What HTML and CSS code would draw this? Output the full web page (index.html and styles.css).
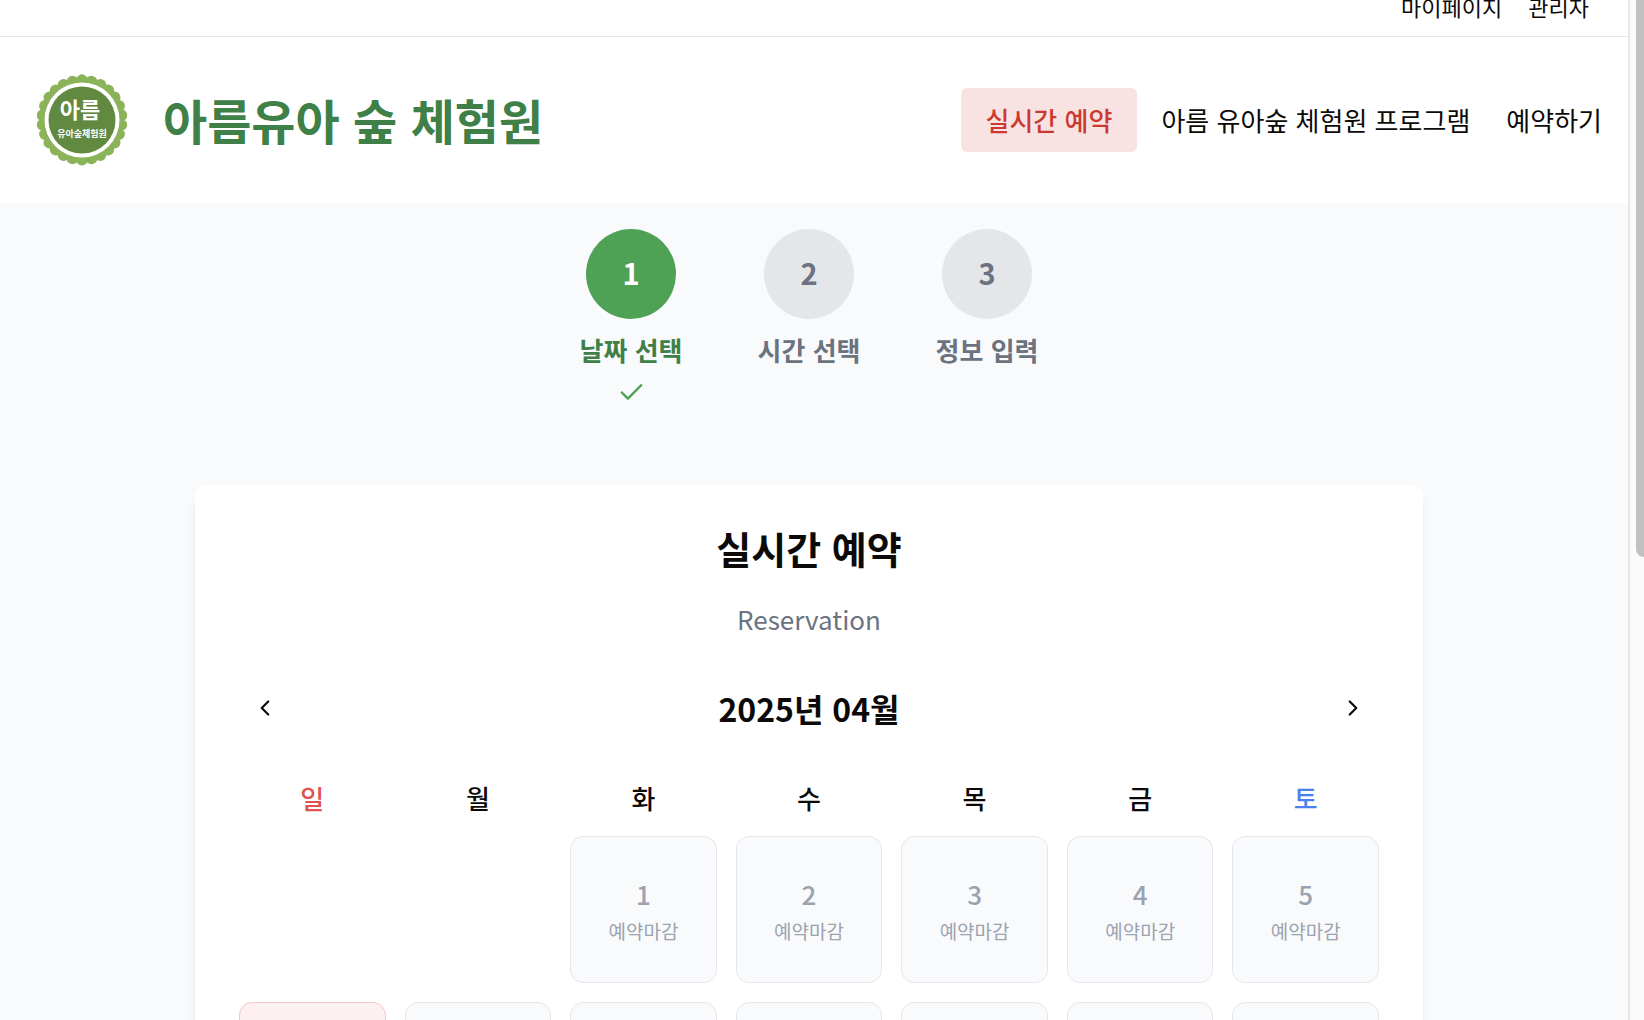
FILE: index.html
```html
<!DOCTYPE html>
<html lang="ko">
<head>
<meta charset="utf-8">
<meta name="viewport" content="width=device-width, initial-scale=1">
<title>아름유아 숲 체험원</title>
<link rel="stylesheet" href="styles.css">
</head>
<body>
<div class="viewport">
  <div class="page">
    <nav class="topbar" aria-label="사용자 메뉴">
      <a href="#">마이페이지</a>
      <a href="#">관리자</a>
    </nav>
    <header class="header">
      <a class="brand" href="#">
        <svg class="logo" viewBox="0 0 92 92" aria-hidden="true">
          <circle cx="46" cy="46" r="40" fill="#8ab35a"/>
          <circle cx="46" cy="46" r="39.5" fill="none" stroke="#8ab35a" stroke-width="12" stroke-linecap="round" pathLength="26" stroke-dasharray="0 1" transform="rotate(-90 46 46)"/>
          <circle cx="46" cy="46" r="37.5" fill="#fff"/>
          <circle cx="46" cy="46" r="33.5" fill="#61893f"/>
          <text class="logo-name" x="44" y="44" text-anchor="middle">아름</text>
          <text class="logo-sub" x="46" y="63" text-anchor="middle">유아숲체험원</text>
        </svg>
        <span class="brand-name">아름유아 숲 체험원</span>
      </a>
      <nav class="nav" aria-label="주 메뉴">
        <a class="nav-link nav-link-active" href="#">실시간 예약</a>
        <a class="nav-link" href="#">아름 유아숲 체험원 프로그램</a>
        <a class="nav-link" href="#">예약하기</a>
      </nav>
    </header>
    <main class="main">
      <ol class="steps">
        <li class="step step-current">
          <span class="step-number">1</span>
          <span class="step-label">날짜 선택</span>
          <svg class="step-check" viewBox="0 0 24 24" aria-hidden="true"><path d="M20 6 9 17l-5-5"/></svg>
        </li>
        <li class="step">
          <span class="step-number">2</span>
          <span class="step-label">시간 선택</span>
        </li>
        <li class="step">
          <span class="step-number">3</span>
          <span class="step-label">정보 입력</span>
        </li>
      </ol>
      <section class="card">
        <h1 class="card-title">실시간 예약</h1>
        <p class="card-subtitle">Reservation</p>
        <div class="month">
          <button class="month-button" type="button" aria-label="이전 달"><svg viewBox="0 0 24 24" aria-hidden="true"><path d="m15 18-6-6 6-6"/></svg></button>
          <h2 class="month-name">2025년 04월</h2>
          <button class="month-button" type="button" aria-label="다음 달"><svg viewBox="0 0 24 24" aria-hidden="true"><path d="m9 18 6-6-6-6"/></svg></button>
        </div>
        <div class="weekdays">
          <span class="sunday">일</span><span>월</span><span>화</span><span>수</span><span>목</span><span>금</span><span class="saturday">토</span>
        </div>
        <div class="days">
          <button class="day day-first" type="button" disabled><span class="day-number">1</span><span class="day-state">예약마감</span></button>
          <button class="day" type="button" disabled><span class="day-number">2</span><span class="day-state">예약마감</span></button>
          <button class="day" type="button" disabled><span class="day-number">3</span><span class="day-state">예약마감</span></button>
          <button class="day" type="button" disabled><span class="day-number">4</span><span class="day-state">예약마감</span></button>
          <button class="day" type="button" disabled><span class="day-number">5</span><span class="day-state">예약마감</span></button>
          <button class="day day-closed" type="button" disabled><span class="day-number">6</span></button>
          <button class="day" type="button" disabled><span class="day-number">7</span><span class="day-state">예약마감</span></button>
          <button class="day" type="button" disabled><span class="day-number">8</span><span class="day-state">예약마감</span></button>
          <button class="day" type="button" disabled><span class="day-number">9</span><span class="day-state">예약마감</span></button>
          <button class="day" type="button" disabled><span class="day-number">10</span><span class="day-state">예약마감</span></button>
          <button class="day" type="button" disabled><span class="day-number">11</span><span class="day-state">예약마감</span></button>
          <button class="day" type="button" disabled><span class="day-number">12</span><span class="day-state">예약마감</span></button>
        </div>
      </section>
    </main>
  </div>
  <div class="scrollbar" aria-hidden="true"><div class="scrollbar-thumb"></div></div>
</div>
</body>
</html>
```

FILE: styles.css
```css
* {
  box-sizing: border-box;
}

body {
  margin: 0;
  background: #fff;
  color: #0c0a09;
  font-family: "Noto Sans CJK KR", "Noto Sans", sans-serif;
  font-size: 26px;
  line-height: 38px;
}

a {
  color: inherit;
  text-decoration: none;
}

button {
  padding: 0;
  border: 0;
  background: none;
  color: inherit;
  font: inherit;
}

h1, h2, p, ol {
  margin: 0;
  padding: 0;
}

.viewport {
  display: flex;
  height: 100vh;
  overflow: hidden;
}

.page {
  flex: 1;
  min-width: 0;
  overflow: hidden;
}

/* Utility links, partly scrolled out above the window */
.topbar {
  display: flex;
  justify-content: flex-end;
  align-items: flex-end;
  gap: 26px;
  height: 37px;
  padding: 0 39px 14px;
  border-bottom: 1px solid #e5e5e5;
  font-size: 22px;
  line-height: 32px;
}

.header {
  display: flex;
  justify-content: space-between;
  align-items: center;
  height: 166px;
  padding: 0 26px 0 36px;
}

.brand {
  display: flex;
  align-items: center;
  gap: 35px;
}

.logo {
  width: 92px;
  height: 92px;
}

.logo-name {
  fill: #fff;
  font-size: 22px;
  font-weight: 700;
}

.logo-sub {
  fill: #fff;
  font-size: 9px;
  font-weight: 700;
}

.brand-name {
  padding-bottom: 2px;
  color: #3e8047;
  font-size: 48px;
  font-weight: 700;
  line-height: 58px;
}

.nav {
  display: flex;
  align-items: center;
}

.nav-link {
  margin-left: 36px;
}

.nav-link-active {
  padding: 13px 25px;
  border-radius: 6px;
  background: #f9e3e2;
  color: #cb3a31;
  font-weight: 500;
}

.nav-link-active + .nav-link {
  margin-left: 24px;
}

.main {
  min-height: 100vh;
  padding: 26px 10px 0 0;
  background: #f9fafc;
}

.steps {
  display: flex;
  justify-content: center;
  margin-bottom: 76px;
  list-style: none;
}

.step {
  display: flex;
  flex-direction: column;
  align-items: center;
  width: 178px;
  min-height: 180px;
  color: #6b7280;
}

.step-number {
  display: flex;
  justify-content: center;
  align-items: center;
  width: 90px;
  height: 90px;
  margin-bottom: 12px;
  padding-bottom: 4px;
  border-radius: 50%;
  background: #e5e6ea;
  font-size: 29px;
  font-weight: 700;
}

.step-label {
  font-weight: 700;
}

.step-current {
  color: #3e8047;
}

.step-current .step-number {
  background: #4fa155;
  color: #fff;
}

.step-check {
  width: 29px;
  height: 29px;
  margin-top: 9px;
  fill: none;
  stroke: #4fa155;
  stroke-width: 2;
  stroke-linecap: round;
  stroke-linejoin: round;
}

.card {
  max-width: 1228px;
  margin: 0 auto;
  padding: 37px 44px;
  border-radius: 13px;
  background: #fff;
  box-shadow: 0 10px 12px -3px rgba(0, 0, 0, 0.1), 0 4px 6px -4px rgba(0, 0, 0, 0.1);
}

.card-title {
  font-size: 38px;
  line-height: 52px;
  text-align: center;
}

.card-subtitle {
  margin-top: 26px;
  color: #6b7280;
  text-align: center;
}

.month {
  display: flex;
  justify-content: space-between;
  align-items: center;
  margin-top: 44px;
}

.month-button {
  display: flex;
  justify-content: center;
  align-items: center;
  width: 52px;
  height: 52px;
}

.month-button svg {
  width: 26px;
  height: 26px;
  fill: none;
  stroke: currentColor;
  stroke-width: 2;
  stroke-linecap: round;
  stroke-linejoin: round;
}

.month-name {
  font-size: 32px;
  line-height: 44px;
}

.weekdays, .days {
  display: grid;
  grid-template-columns: repeat(7, 1fr);
  gap: 19px;
}

.weekdays {
  margin: 45px 0 19px;
  font-weight: 500;
  text-align: center;
}

.sunday {
  color: #e0524d;
}

.saturday {
  color: #4b7ff0;
}

.day {
  display: flex;
  flex-direction: column;
  justify-content: center;
  align-items: center;
  gap: 2px;
  aspect-ratio: 1;
  padding-top: 4px;
  border: 1px solid #e5e7eb;
  border-radius: 13px;
  background: #f9fafc;
  color: #9ca3af;
}

.day-first {
  grid-column-start: 3;
}

.day-closed {
  border-color: #f3c7c5;
  background: #fcf1f0;
  color: #e0524d;
}

.day-number {
  font-size: 26px;
  font-weight: 500;
}

.day-state {
  font-size: 19px;
  line-height: 32px;
}

.scrollbar {
  display: flex;
  justify-content: flex-end;
  width: 16px;
  border-left: 2px solid #e8e8e8;
  background: #fafafa;
}

.scrollbar-thumb {
  width: 8px;
  height: 557px;
  border-bottom-left-radius: 8px;
  background: #c1c1c1;
}
```
